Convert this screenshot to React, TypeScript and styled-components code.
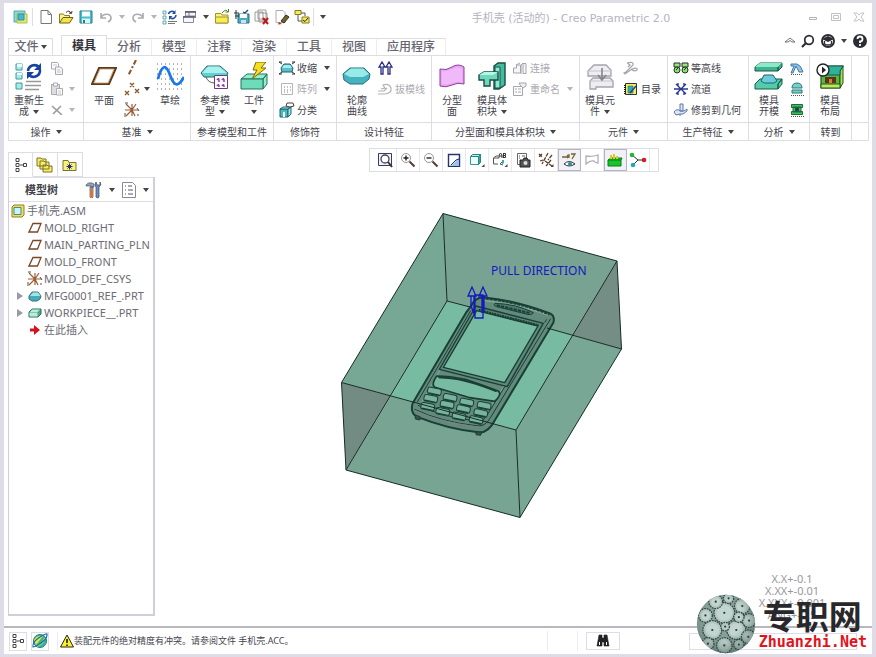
import React from 'react';
import styled, { createGlobalStyle, css } from 'styled-components';

const UI = '"Noto Sans", "Noto Sans CJK SC", sans-serif';
const line = '#dedde6';

const GlobalStyle = createGlobalStyle`
  * { box-sizing: border-box; }
  body { margin: 0; background: #fff; font-family: ${UI}; color: #444; }
  button, select { font: inherit; color: inherit; }
`;

/* ---------- icons ---------- */

const curve = 'M2 17C6 2 10 2 14 13S22 26 28 15';

const icons: Record<string, [number, number, React.ReactNode]> = {
  app: [16, 16, <><path d="M1 2h11v11H1z" fill="#8fd6d0" stroke="#56a8a8" /><path d="M4 5h10v9H4z" fill="#e5e86a" stroke="#a9c054" /><path d="M5 5h6v6H5z" fill="#3fb9d4" stroke="#3b8ea0" /></>],
  newFile: [14, 16, <path d="M2 1.500h7l3.500 4V14.500H2zM9 1.500v4h3.500" fill="#fff" stroke="#777" />],
  open: [16, 16, <><path d="M1.500 14V5h4l1 1.500h5V9" fill="#f8f29a" stroke="#8c7d1c" /><path d="M1.500 14 5 8.500h10L11.500 14z" fill="#f3e44c" stroke="#6f6312" /><path d="M8 3.500q3-3 5 .5m1-2-.5 2.500L11 4" fill="none" stroke="#333" /></>],
  save: [14, 14, <><path d="M1 1h12v12H1z" fill="#48bfc8" stroke="#2c7d8c" /><path d="M3 1.500h8v5H3z" fill="#f5ffff" /><path d="M3 8.500h8V13H3z" fill="#d8f6f6" /><path d="M4 10h2v3H4z" fill="#2c7d8c" /></>],
  undo: [14, 12, <path d="M2 2v5h5M2 7c2-5 10-5 10 0 0 2-1 3-3 4" fill="none" stroke="#aaa9b2" strokeWidth="1.600" />],
  redo: [14, 12, <path d="M12 2v5H7M12 7C10 2 2 2 2 7c0 2 1 3 3 4" fill="none" stroke="#aaa9b2" strokeWidth="1.600" />],
  regenSmall: [16, 16, <><path d="M1 2h3v3H1zM1 7h3v3H1zM1 12h3v3H1z" fill="#dff" stroke="#4b93a0" strokeWidth=".8" /><path d="M6.500 5a3.500 3.500 0 0 1 6-1.500M14 6a3.500 3.500 0 0 1-6 2.500" fill="none" stroke="#1d4f9f" strokeWidth="1.600" /><path d="M13.500 1v4H10zM7 11V7h3.500z" fill="#1d4f9f" /><path d="M6 12.500h9M6 14.500h7" stroke="#777" /></>],
  windows: [16, 14, <><path d="M3.500 1.500h10V6h-10zM1.500 6.500h10v6h-10z" fill="#f7f7fb" stroke="#8a8a9a" /><path d="M3 2h11M1 7h13" stroke="#55556b" strokeWidth="1.300" /><path d="M7 7V2" stroke="#778" /></>],
  folder: [16, 16, <><path d="M1.500 14V4.500H7L8 6h6v8z" fill="#fbf27a" stroke="#a0942e" /><path d="M1.500 14V8H14v6z" fill="#f6ec54" stroke="#a0942e" /><path d="M8 4q4-5 6-1M14.500 0v3h-3" fill="none" stroke="#5a7d2c" /></>],
  saveCheck: [16, 16, <><path d="M4 5h11v9H4z" fill="#48aebc" stroke="#2c6b80" /><path d="M6 5h7v4H6z" fill="#fff" /><path d="M7 11h5v3H7z" fill="#cdf" /><path d="M2 1v9M0 4h5M1 7h4" stroke="#333" /><path d="M9 3l2 1 3-3" fill="none" stroke="#246" strokeWidth="1.300" /></>],
  discard: [16, 16, <><path d="M1 3h8v9H1zM4 1h8v9H4zM5 4h8v9H5z" fill="#fafafa" stroke="#888" strokeWidth=".8" /><path d="m9 9 5 6m0-6-5 6" stroke="#c01818" strokeWidth="2" /></>],
  erase: [16, 16, <><path d="M2 1.500h7l2 2v10H2z" fill="#fff" stroke="#aab" /><path d="m12 6-5 6 3 2 5-6z" fill="#6f6330" stroke="#3a2f14" /><path d="m5 13 3 2-4 .5z" fill="#c22" /></>],
  treeCheck: [16, 16, <><path d="M1 1.500h6v4H1zM8 8h7v6H8z" fill="#f7ec5b" stroke="#877b16" /><path d="M4 6v6h4M7 4h4v3" fill="none" stroke="#555" /><path d="m9 11 2 1.500L14 9" fill="none" stroke="#222" /></>],
  regen: [28, 30, <><path d="M1 3h6v6H1zM1 12h6v6H1zM1 22h6v6H1z" fill="#a5ece8" stroke="#3f98a0" /><path d="M2 3h5v3H2zM2 12h5v2H2z" fill="#edffff" /><path d="M13 10a6.500 6.500 0 0 1 11-4M25 9a6.500 6.500 0 0 1-11 5" fill="none" stroke="#1742a0" strokeWidth="2.600" /><path d="M26 2v7h-7zM12 18v-7h7z" fill="#1742a0" /><path d="M11 20.500h15M10 24.500h16M10 28.500h14" stroke="#999" strokeWidth="1.300" /></>],
  copy: [14, 14, <><path d="M1.500 1.500h6l1 1V8h-7z" fill="#fff" stroke="#aaa9b0" /><path d="M5.500 6h5l2 2v5.500h-7z" fill="#f6f5f9" stroke="#aaa9b0" /><path d="M3 4h4M7 9h3M7 11h4" stroke="#c5c4cc" /></>],
  paste: [14, 14, <><path d="M1.500 2.500h8v10h-8z" fill="#dddce2" stroke="#aaa9b0" /><path d="M3.500 1h4v3h-4zM6.500 6.500h6V13h-6z" fill="#fff" stroke="#aaa9b0" /><path d="M8 9h3M8 11h3" stroke="#c0bfc6" /></>],
  cross: [12, 10, <path d="m1 1 10 9M10 1 2 9" stroke="#9b9aa2" strokeWidth="1.600" />],
  plane: [26, 20, <><path d="M8 2h17l-7 16H1z" fill="#fff" stroke="#5e3c1e" strokeWidth="2" /><path d="M9 3h14l-6 14H3z" fill="none" stroke="#c99461" strokeWidth=".8" /></>],
  axis: [14, 16, <path d="M11 0 3 16" stroke="#8a5328" strokeWidth="2" strokeDasharray="5 2 2 2" />],
  points: [16, 14, <path d="m6 1 4 4m0-4L6 5M1 9l4 4m0-4-4 4M11 7l4 4m0-4-4 4" stroke="#8a5328" strokeWidth="1.300" />],
  csys: [16, 16, <><path d="M8 8h7M8 8l-6 6M8 8 2 2M8 8l4-6M8 8l3 6M8 8H1M8 8V2M8 8v6" stroke="#9a5c33" strokeWidth="1.200" /><path d="M1 11v4M1 1h3M13 6l2 3M14 12v2" stroke="#555" /></>],
  sketch: [28, 28, <><path d="M1 2h27M1 7h27M1 12h27M1 17h27M1 22h27M1 27h27" stroke="#667" strokeDasharray="1 3" /><path d={curve} fill="none" stroke="#1a78e8" strokeWidth="2.800" /></>],
  refModel: [30, 28, <><path d="M1 11 7 4h13l8 7-2 4H4z" fill="#62cfd0" stroke="#236a72" /><path d="M2 11 8 4.500h11l8 6.500z" fill="#a9f1ec" /><path d="M6 15q2 6 9 6" fill="none" stroke="#555" /><path d="M14.500 13.500h13v13h-13z" fill="#fff" stroke="#6b3c82" /><path d="M17 18q2-3 2 1v1m3-2q2-3 2 1v1m-7 4q2-3 2 1m3-1q2-3 2 1" fill="none" stroke="#93a" strokeWidth="1.500" /></>],
  workpiece: [30, 28, <><path d="M2 17 8 12h20l-4 5zM24 17l4-5v10l-4 5z" fill="#8ff0d0" stroke="#26735b" /><path d="M2 17h22v10H2z" fill="#6ddcb8" stroke="#26735b" /><path d="m17 0-3 8h4l-5 9L27 6h-5l5-6z" fill="#f7dc22" stroke="#7b6a0e" /></>],
  shrink: [16, 14, <><path d="M2 7 5 3h6l3 4-1 4H3z" fill="#59bfc8" stroke="#1f636e" /><path d="M5 4h6l2 3H3z" fill="#a6eeee" /><path d="m0 1 3 2M16 1l-3 2M0 13l3-2M16 13l-3-2M0 1h3M16 1h-3M0 13h3m13 0h-3" stroke="#333" /></>],
  pattern: [14, 14, <><path d="M1.500 1.500h11v11h-11z" fill="#fff" stroke="#b5b4bc" /><path d="M4 5h1m2 0h1m2 0h1M4 8h1m2 0h1m2 0h1M4 10h1m2 0h1" stroke="#aaa" strokeWidth="1.500" /></>],
  classify: [16, 16, <><path d="M1 7h8v8H1z" fill="#4db9bd" stroke="#1c646e" /><path d="m1 7 3-2h8L9 7zM9 7l3-2v7l-3 3z" fill="#9eeaea" stroke="#1c646e" /><path d="M8 1h6l1 3-4 1-4-1z" fill="#fff" stroke="#444" /><path d="M4 15v-5h2v5" fill="#eff" /></>],
  silhouette: [30, 20, <><path d="M1 8 8 2h14l6 6-1 5-6 5H8l-6-4z" fill="#46b2bf" stroke="#22707c" /><path d="M2 8 9 2.500h12L27 8l-6 3H8z" fill="#96ebe9" /></>],
  pull: [16, 14, <path d="M4 13V6H2l3-5 3 5H6v7zM11 13V6H9l3-5 3 5h-2v7z" fill="#fff" stroke="#2b2b83" strokeWidth="1.300" />],
  draft: [16, 14, <path d="M1 12h7q7-1 6-6-2-5-8-3l2 3-4 1M1 9h6l3-3" fill="none" stroke="#b3b2b9" strokeWidth="1.200" />],
  surface: [26, 24, <><path d="M1 5q6 2 12-2t12 0v17q-6-2-12 1T1 22z" fill="#e9a6f3" stroke="#8a3f9c" /><path d="M3 7q5 1 10-2t10 0v13q-5-1-10 1T3 20z" fill="#f0baf8" /></>],
  volume: [28, 28, <><path d="M20 1h7v22l-6 4h-5V4z" fill="#45bba1" stroke="#174f45" strokeWidth="1.400" /><path d="M17 5h5v21h-5z" fill="#8fead0" stroke="#174f45" /><path d="M1 13l5-3h14v8H12v6H6v-6H1z" fill="#6fd8bd" stroke="#174f45" strokeWidth="1.400" /><path d="m1 13 5-3h14l-5 3z" fill="#b5f7e7" /></>],
  attach: [16, 14, <path d="M1.500 7h3V4h4v8h-7zM11 2.500h3v10h-3zM4 4l4-2M11 2l-2 2v9" fill="#f6f6f8" stroke="#a5a4ac" />],
  rename: [16, 16, <><path d="M1.500 5.500h9v9h-9z" fill="#fff" stroke="#a5a4ac" /><path d="M3 8h2m1 0h3M3 11h2m1 0h3M7 2h7v3l-3 2-3-3z" fill="#eee" stroke="#a5a4ac" /></>],
  component: [28, 28, <><path d="M2 9 8 3h12l5 5v6H2zM7 16h17l3 3v6H10v2H4v-8z" fill="#eeedf1" stroke="#a5a4ac" strokeWidth="1.300" /><path d="M2 9h23M4 19h22" stroke="#c6c5cc" /><path d="M16 6v11m-4-4 4 5 4-5" fill="none" stroke="#85848c" strokeWidth="1.600" /></>],
  ejector: [16, 14, <path d="M4 2q7-2 6 2L3 11l-2 1 1 1 7-5q6-2 5 1-3 2-6-1M4 2l3 2-2 2" fill="none" stroke="#a5a4ac" strokeWidth="1.200" />],
  catalog: [14, 14, <><path d="M1.500 1.500h11v11h-11z" fill="#f5ef64" stroke="#333" /><path d="M1 3v9" stroke="#111" strokeWidth="2" strokeDasharray="1 1" /><path d="M4 4h5v7H4z" fill="#38a7bd" stroke="#276" strokeWidth=".6" /><path d="m6 11 6-7" stroke="#248" strokeWidth="1.500" /></>],
  waterline: [16, 14, <><path d="M1 2h6v4H1zM9 2h6v4H9z" fill="#9fe37a" stroke="#233" /><circle cx="4" cy="9" r="3" fill="#8de06c" stroke="#233" /><circle cx="12" cy="9" r="3" fill="#8de06c" stroke="#233" /><path d="m3 9 2-2m6 2 2-2" stroke="#233" /></>],
  runner: [16, 14, <path d="M1 7h14M8 7 3 2M8 7l5-5M8 7l-5 5M8 7l5 5M5 1v3M11 1v3M5 10v3M11 10v3" fill="none" stroke="#2a3a92" strokeWidth="1.400" />],
  trim: [16, 14, <path d="M7 1h3v7H7zM1 9q3-4 6-1h4l3-2v2l-4 3H7l-4 1zM7 11v2" fill="#dce6f8" stroke="#5c77a8" />],
  opening: [30, 28, <><path d="M1 5 6 1h22l-4 4v4H1zM24 5l4-4v4l-4 4z" fill="#3fb190" stroke="#185a49" /><path d="m1 5 5-4h22l-4 4z" fill="#8aebcb" /><path d="m1 22 5-5h22l-4 5v5H1zM24 22l4-5v5l-4 5z" fill="#52cda8" stroke="#185a49" /><path d="m7 19 3-6h9l4 6-3 2H10z" fill="#6ccbd8" stroke="#22606e" /></>],
  draftCheck: [14, 14, <><path d="M1 3h6q4 1 6 8h-4L6 5l-3 7H1l3-7H1z" fill="#8cc5e8" stroke="#4678a8" /><path d="M1 13.500h12" stroke="#555" strokeDasharray="1 1" /></>],
  thickness: [14, 14, <><path d="M2 6q0-5 5-5t5 5zM2 8h10v3H2z" fill="#76d1c7" stroke="#2a7778" /><path d="M1 13.500h13" stroke="#555" strokeDasharray="1 1" /></>],
  splitCheck: [14, 14, <><path d="M1.500 1.500h11v3h-11zM3 4h8v5H3zM1.500 8.500h11v3h-11z" fill="#3fbf60" stroke="#1d6b37" /><path d="M5 5h4v3H5z" fill="#245" /><path d="M1 13.500h13" stroke="#555" strokeDasharray="1 1" /></>],
  layout: [28, 28, <><path d="M5 9 9 4h18l-3 5v17H5z" fill="#58b83c" stroke="#23551c" strokeWidth="1.200" /><path d="m24 9 3-5v17l-3 5z" fill="#a9df55" stroke="#23551c" /><path d="M5 9 9 4h18l-3 5v4H5z" fill="#2fb29a" stroke="#18594c" /><path d="M5 22h19v4H5z" fill="#bfe95c" stroke="#23551c" /><path d="M9 15h11v6H9z" fill="#5b3320" /><path d="M13 17h3v4h-3z" fill="#dc7b32" /><circle cx="7" cy="8" r="6" fill="#fff" stroke="#222" strokeWidth="1.400" /><path d="M6 4.500v7l4-3.500z" fill="#222" /></>],
  refit: [16, 16, <><path d="M1.500 1.500h13v12h-13z" fill="#eef1fb" stroke="#343a6e" /><circle cx="8" cy="7" r="4" fill="#fff" stroke="#444" strokeWidth="1.300" /><path d="m11 10 4 5" stroke="#333" strokeWidth="2" /></>],
  zoomIn: [16, 16, <><circle cx="6" cy="6" r="4.500" fill="#fff" stroke="#999" /><path d="M3.500 6h5M6 3.500v5" stroke="#222" strokeWidth="1.400" /><path d="m9.500 9.500 5 5" stroke="#4e3e36" strokeWidth="2" /></>],
  zoomOut: [16, 16, <><circle cx="6" cy="6" r="4.500" fill="#fff" stroke="#999" /><path d="M3.500 6h5" stroke="#222" strokeWidth="1.400" /><path d="m9.500 9.500 5 5" stroke="#4e3e36" strokeWidth="2" /></>],
  repaint: [14, 14, <><path d="M1.500 1.500h11v12h-11z" fill="#fff" stroke="#26356f" strokeWidth="1.400" /><path d="M4 13 12 5v8z" fill="#9cc1ee" /><path d="m4 12 5-5 3-1" fill="none" stroke="#26356f" /></>],
  shaded: [16, 16, <><path d="M1.500 4.500h8v8h-8z" fill="#f3ffff" stroke="#399" /><path d="m1.500 4.500 2-2h8l-2 2z" fill="#b9ece6" stroke="#288" /><path d="m9.500 4.500 2-2v8l-2 2z" fill="#36a79d" stroke="#288" /><path d="M15.500 12v3h-3z" fill="#444" /></>],
  saved: [16, 16, <><path d="M6 12H1.500V6L4 4h2M1.500 6H7M10 10l-2 2 3 1" fill="none" stroke="#555" /><path d="M7 6V3l1.500-2L10 3v3M7 4h3M11.500 1v5M11.500 1.500h2v2h-2m2 0v2h-2" fill="none" stroke="#333" /><path d="M10 8v5l2-2V8z" fill="#4ab" /><path d="M15.500 12v3h-3z" fill="#444" /></>],
  camera: [16, 16, <><path d="M2.500 1.500h9v11h-9z" fill="#fff" stroke="#666" /><path d="M4 4h1m2 0h3M4 6h1" stroke="#555" /><path d="M5 8h3l1-2h3l1 2h2v7H5z" fill="#555" stroke="#222" /><circle cx="10.500" cy="11" r="2" fill="#ddd" /></>],
  datum: [16, 16, <><path d="m1 2 3 3m0-3L1 5M10 1 4 12M14 3l-4 5M7 9l7 5m-1-6-5 6M2 9l3-1" stroke="#5d3d28" strokeWidth="1.300" strokeDasharray="4 1" /><path d="M15.500 12v3h-3z" fill="#444" /></>],
  annotation: [16, 16, <><path d="M1 5h7V2M6 3l2 2-2 1M10 2h4l-3 5" fill="none" stroke="#74662a" strokeWidth="1.300" /><path d="M3 12q5-5 11 0-6 4-11 0z" fill="#fff" stroke="#333" /><circle cx="9" cy="12" r="2" fill="#2c8f9b" /></>],
  section: [16, 14, <path d="M2 3q6 1 12-1v8q-3 0-4-2-4-1-8 3z" fill="none" stroke="#b1b0b7" strokeWidth="1.300" />],
  spin: [18, 16, <><path d="M2 8h13v6H2zM2 8l3-2h11l-1 2" fill="#17c52b" stroke="#087a16" /><path d="M5 7V3m3 4V2m3 5V4" stroke="#e3c626" strokeWidth="2" /></>],
  center: [18, 16, <><path d="m3 3 6 5h6M9 8l-5 5" fill="none" stroke="#333" /><circle cx="3" cy="3" r="2.300" fill="#28b33b" /><circle cx="15" cy="8" r="2.300" fill="#d21c1c" /><circle cx="4" cy="13" r="2.300" fill="#2aa6bb" /></>],
  tree: [14, 16, <><path d="M2 1.500h3v3H2zM2 6.500h3v3H2zM2 11.500h3v3H2zM9.500 6.500h3v3h-3z" fill="#fff" stroke="#444" /><path d="M6 8h3" stroke="#444" /></>],
  folders: [18, 18, <path d="M1 2h4l1 1h4v7H1zM4 5h4l1 1h4v7H4zM7 9h4l1 1h4v6H7z" fill="#f5ed66" stroke="#7c722a" />],
  favorite: [16, 14, <><path d="M1 12.500v-10h5l1 2h7v8z" fill="#f8f27a" stroke="#7c722a" /><path d="M4.500 8.500h6M7.500 5.500v6M5.500 6.500l4 4m0-4-4 4" stroke="#22317c" /></>],
  tools: [18, 18, <><path d="M1 4q2-3 6-2l2 1v3H6V5H1zM5 6h3v10H5z" fill="#8fa4bd" stroke="#556" strokeWidth=".7" /><path d="M5 8h3v9H5z" fill="#d0763e" /><path d="M11 1q-2 3 0 5v10q2 2 3 0V6q3-2 1-5v3h-3z" fill="#6b8eca" stroke="#445" strokeWidth=".7" /></>],
  list: [16, 18, <><path d="M1.500 1.500h10l3 3v12h-13z" fill="#fff" stroke="#889" /><path d="M4 5h1m2 0h4M4 9h1m2 0h5M4 13h1m2 0h5" stroke="#556" /></>],
  asm: [14, 14, <><path d="M1 3 3 1h10v10l-2 2H1z" fill="#f2dc58" stroke="#977e20" /><path d="M3 3.500h7v7H3z" fill="#c5f5f9" stroke="#388fa0" /></>],
  planeSmall: [14, 12, <path d="M5 1.500h8L9.500 10H1z" fill="#fff" stroke="#7a4528" strokeWidth="1.300" />],
  refPart: [14, 12, <><path d="M1 6 4 2h6l3 4-1 3-3 2H4L1 9z" fill="#4ba9b7" stroke="#2f7480" /><path d="M2 6 5 2.500h5L12.500 6z" fill="#9be6e6" /></>],
  workPart: [14, 12, <><path d="m1 5 3-3h9v5l-3 3H1z" fill="#4fa58b" stroke="#2f6c5a" /><path d="M1.500 5.500h8v4h-8zM2 5l2-2.500h8L9.500 5z" fill="#b9ecd9" /></>],
  insert: [12, 12, <path d="M1 4.500h4V1l6 5-6 5V7.500H1z" fill="#d4141c" />],
  browser: [18, 18, <><circle cx="9" cy="9" r="6.500" fill="#35b4a0" stroke="#217f91" /><path d="M3 8Q6 3 12 4L5 13z" fill="#e6e93a" /><path d="M6 14q6-2 8-8" fill="none" stroke="#9be04a" strokeWidth="2" /><path d="M2 15Q1 10 9 5t7-2q0 4-6 8t-8 4z" fill="none" stroke="#1c64b2" strokeWidth="1.200" /></>],
  warning: [14, 14, <><path d="M7 1 13.500 13H.5z" fill="#fff22c" stroke="#222" /><path d="M7 5v4m0 1.500V12" stroke="#111" strokeWidth="1.500" /></>],
  binoculars: [14, 14, <><path d="M3 1h3v3h2V1h3l2 11H8V8H6v4H1z" fill="#222" stroke="#222" strokeWidth=".6" /><path d="M3.500 8v3M10.500 8v3" stroke="#fff" /></>],
  collapse: [12, 8, <path d="m1 5 5-4 5 4H8L6 3.500 4 5z" fill="#fff" stroke="#555" strokeWidth=".8" />],
  search: [14, 14, <><circle cx="8" cy="6" r="4.300" fill="none" stroke="#2c2c34" strokeWidth="1.700" /><path d="m5 9-4 4" stroke="#2c2c34" strokeWidth="2.200" /></>],
  learn: [16, 16, <><circle cx="8" cy="8" r="6" fill="#fff" stroke="#2c2c34" strokeWidth="2" /><path d="m2 6 6-3 6 3-6 3z" fill="#2c2c34" /><path d="M4.500 8v3q3.500 2 7 0V8" fill="none" stroke="#2c2c34" strokeWidth="1.300" /></>],
  help: [16, 16, <><circle cx="8" cy="8" r="7" fill="#2c2c34" /><path d="M5.500 6q0-2.500 2.500-2.500T10.500 6 8 8.500V10m0 1v2" fill="none" stroke="#fff" strokeWidth="1.800" /></>],
  minimize: [10, 10, <path d="M1.500 5.500h7v2h-7z" fill="#fff" stroke="#b5b4bc" />],
  maximize: [12, 10, <path d="M1.500 1.500h9v7h-9zM3.500 3.500h5v3h-5z" fill="#fff" stroke="#c2c1c9" />],
  close: [12, 10, <path d="M1 1h3l2 2 2-2h3L8 5l3 4H8L6 7 4 9H1l3-4z" fill="#fff" stroke="#c2c1c9" />],
};

const Glyph = styled.svg`
  display: block;
  flex: none;
`;

function Icon({ name }: { name: string }) {
  const [w, h, shape] = icons[name];
  return <Glyph width={w} height={h} viewBox={`0 0 ${w} ${h}`} aria-hidden="true">{shape}</Glyph>;
}

const Caret = styled.span<{ $dim?: boolean }>`
  display: inline-block;
  flex: none;
  border: 3px solid transparent;
  border-top: 4px solid ${p => (p.$dim ? '#b5b4bc' : '#444')};
  border-bottom: 0;
`;

/* ---------- window frame ---------- */

const Shell = styled.div`
  position: relative;
  display: flex;
  flex-direction: column;
  min-height: 100vh;
  border: 4px solid #dddce7;
  border-top-width: 3px;
`;

const TitleBar = styled.header`
  display: flex;
  align-items: center;
  height: 27px;
  padding: 0 2px 0 7px;
`;

const plain = css`
  display: flex;
  align-items: center;
  justify-content: center;
  padding: 0;
  border: 0;
  background: none;
`;

const QuickButton = styled.button<{ $slim?: boolean }>`
  ${plain}
  width: ${p => (p.$slim ? 12 : 20)}px;
  height: 20px;
`;

const QuickDivider = styled.span`
  width: 1px;
  height: 18px;
  margin: 0 3px 0 1px;
  background: ${line};
`;

const WindowTitle = styled.h1`
  flex: 1;
  margin: 0;
  padding-left: 12px;
  text-align: center;
  font: 11px "DejaVu Sans", "Noto Sans CJK SC", sans-serif;
  color: #b4b3bf;
`;

const WindowButton = styled.button`
  ${plain}
  width: 23px;
  height: 20px;
`;

const TabRow = styled.nav`
  display: flex;
  align-items: flex-end;
  height: 25px;
  padding: 0 4px;
`;

const Tab = styled.button<{ $kind?: 'file' | 'active' }>`
  ${plain}
  gap: 2px;
  height: 17px;
  min-width: 45px;
  padding: 0 10px;
  font-size: 12px;
  font-weight: 500;
  line-height: 16px;
  color: #66656f;
  white-space: nowrap;
  border-top: 1px solid ${line};
  border-right: 1px solid #ecebf1;
  ${p => p.$kind === 'file' && css`
    margin-right: 8px;
    padding: 0 5px;
    border: 1px solid ${line};
    border-bottom: 0;
  `}
  ${p => p.$kind === 'active' && css`
    height: 20px;
    font-weight: 700;
    color: #33323a;
    border: 1px solid ${line};
    border-bottom: 0;
  `}
`;

const TabTools = styled.div`
  display: flex;
  align-items: center;
  gap: 5px;
  height: 28px;
  margin-left: auto;
`;

const ToolButton = styled.button`
  ${plain}
`;

/* ---------- ribbon ---------- */

const Ribbon = styled.section`
  display: grid;
  grid-template-columns: 75px 107px 83px 63px 95px 148px 88px 81px 61px 42px 1fr;
  height: 86px;
  margin: 0 3px 0 4px;
  border: 1px solid ${line};
  font-size: 10px;
  color: #44434c;
`;

const Group = styled.div`
  display: flex;
  flex-direction: column;
  min-width: 0;
  border-right: 1px solid ${line};
  &:last-child { border-right: 0; }
`;

const GroupBody = styled.div`
  display: flex;
  flex: 1;
  padding-top: 1px;
`;

const GroupLabel = styled.div`
  display: flex;
  align-items: center;
  justify-content: center;
  gap: 5px;
  height: 18px;
  border-top: 1px solid ${line};
  line-height: 16px;
  white-space: nowrap;
`;

const BigButton = styled.button<{ $w?: number }>`
  ${plain}
  flex-direction: column;
  justify-content: flex-start;
  width: ${p => p.$w ?? 40}px;
  height: 64px;
  line-height: 11px;
  white-space: nowrap;
`;

const BigIcon = styled.span`
  display: flex;
  align-items: center;
  justify-content: center;
  height: 38px;
`;

const BigLine = styled.span`
  display: flex;
  align-items: center;
  justify-content: center;
  gap: 4px;
  min-height: 11px;
`;

const Stack = styled.div<{ $pad?: number }>`
  display: flex;
  flex-direction: column;
  padding-left: ${p => p.$pad ?? 0}px;
`;

const SmallButton = styled.button<{ $dim?: boolean }>`
  ${plain}
  justify-content: flex-start;
  gap: 2px;
  height: 21px;
  line-height: 14px;
  white-space: nowrap;
  color: ${p => (p.$dim ? '#aaa9b1' : '#44434c')};
`;

const CaretSlot = styled.span<{ $near?: boolean }>`
  display: flex;
  margin-left: ${p => (p.$near ? 2 : 5)}px;
`;

const IconSlot = styled.span`
  display: flex;
  justify-content: center;
  width: 16px;
`;

type Small = { icon: string; label: string; text?: string; caret?: 'dark' | 'dim'; dim?: boolean };

function SmallTool({ icon, label, text, caret, dim }: Small) {
  return (
    <SmallButton $dim={dim} aria-label={label}>
      <IconSlot><Icon name={icon} /></IconSlot>
      {text}
      {caret && <CaretSlot $near={!text}><Caret $dim={caret === 'dim'} /></CaretSlot>}
    </SmallButton>
  );
}

function BigTool({ icon, lines, caret, w }: { icon: string; lines: string[]; caret?: boolean; w?: number }) {
  return (
    <BigButton $w={w}>
      <BigIcon><Icon name={icon} /></BigIcon>
      {lines.map((t, i) => (
        <BigLine key={i}>{t}{caret && i === lines.length - 1 && <Caret />}</BigLine>
      ))}
    </BigButton>
  );
}

function RibbonGroup({ label, caret, children }: { label: string; caret?: boolean; children: React.ReactNode }) {
  return (
    <Group>
      <GroupBody>{children}</GroupBody>
      <GroupLabel>{label}{caret && <Caret />}</GroupLabel>
    </Group>
  );
}

/* ---------- work area ---------- */

const Work = styled.main`
  display: flex;
  flex: 1;
`;

const Side = styled.aside`
  display: flex;
  flex-direction: column;
  width: 151px;
  padding: 11px 0 10px 4px;
`;

const SideTabs = styled.div`
  display: flex;
`;

const SideTab = styled.button<{ $active?: boolean }>`
  ${plain}
  width: 25px;
  height: 25px;
  border: 1px solid ${line};
  border-left-width: ${p => (p.$active ? 1 : 0)}px;
  border-bottom-color: ${p => (p.$active ? '#fff' : line)};
`;

const Panel = styled.div`
  flex: 1;
  border: solid #cfceda;
  border-width: 0 2px 2px 1px;
`;

const PanelHead = styled.div`
  display: flex;
  align-items: center;
  gap: 6px;
  height: 25px;
  padding: 0 4px 0 16px;
  border-top: 1px solid ${line};
  border-bottom: 1px solid ${line};
`;

const PanelTitle = styled.h2`
  flex: 1;
  margin: 0;
  font-size: 11px;
  line-height: 16px;
  color: #44434c;
`;

const TreeList = styled.ul`
  margin: 0;
  padding: 0;
  list-style: none;
`;

const TreeRow = styled.li<{ $root?: boolean }>`
  display: flex;
  align-items: center;
  gap: 1px;
  height: 17px;
  padding-left: ${p => (p.$root ? 1 : 8)}px;
  font-size: 11px;
  line-height: 16px;
  color: #6c6b73;
  white-space: nowrap;
`;

const Twisty = styled.span<{ $show?: boolean }>`
  margin-right: 3px;
  border: 4px solid transparent;
  border-left: 6px solid ${p => (p.$show ? '#9b9aa2' : 'transparent')};
  border-right: 0;
`;

const View = styled.section`
  display: flex;
  flex: 1;
  flex-direction: column;
  min-width: 0;
`;

const ViewBar = styled.div`
  display: flex;
  align-self: center;
  margin-top: 7px;
  padding: 0 8px 0 4px;
  border: 1px solid ${line};
`;

const ViewButton = styled.button<{ $on?: boolean }>`
  ${plain}
  width: 23px;
  height: 22px;
  border-right: 1px solid #e9e8ef;
  ${p => p.$on && css`
    border: 1px solid #b4b3be;
    background: #f1f0f6;
  `}
`;

const Scene = styled.svg`
  display: block;
  flex: 1;
  width: 100%;
  min-height: 0;
`;

/* ---------- status bar ---------- */

const Status = styled.footer`
  display: flex;
  align-items: center;
  gap: 4px;
  height: 28px;
  padding: 0 15px 0 5px;
  border-top: 2px solid #b8b7bd;
  font-size: 9px;
  color: #44434c;
`;

const StatusToggle = styled.button`
  ${plain}
  width: 18px;
  height: 19px;
  border: 1px solid ${line};
`;

const Message = styled.p`
  display: flex;
  flex: 1;
  align-items: center;
  margin: 0 0 0 4px;
  padding-left: 2px;
  border-left: 1px solid #ecebf1;
  line-height: 18px;
`;

const StatusCell = styled.span`
  width: 31px;
  height: 20px;
  border: solid #ecebf1;
  border-width: 0 1px;
`;

const FindButton = styled.button`
  ${plain}
  width: 34px;
  height: 18px;
  margin: 0 65px 0 4px;
  border: 1px solid ${line};
`;

const Filter = styled.select`
  width: 168px;
  height: 17px;
  border: 1px solid ${line};
  background: #fff;
  appearance: none;
`;

/* ---------- overlay in the corner ---------- */

const Tolerances = styled.div`
  position: absolute;
  right: 36px;
  bottom: 33px;
  width: 88px;
  text-align: center;
  font-size: 11px;
  line-height: 12px;
  color: #98979d;
`;

const Brand = styled.div`
  position: absolute;
  right: 5px;
  bottom: 0;
  display: flex;
  align-items: flex-end;
`;

const BrandText = styled.div`
  display: flex;
  flex-direction: column;
  margin-bottom: 2px;
`;

const BrandName = styled.strong`
  padding-left: 7px;
  font: 700 33px/34px "Noto Sans CJK SC", sans-serif;
  color: #28272b;
`;

const BrandSite = styled.span`
  padding-left: 3px;
  font: 700 15px/20px "DejaVu Sans Mono", monospace;
  color: #e3131b;
`;

/* ---------- model drawing ---------- */

const keys = [
  [103, 333], [150, 352], [200, 366], [252, 376],
  [92, 355], [141, 373], [190, 386], [242, 398],
  [83, 379], [128, 394], [177, 408], [228, 419],
];

function Model() {
  return (
    <Scene viewBox="155 172 717 454" role="img" aria-label="模具工件">
      <g stroke="none">
        <path d="M443 213.500 617 261 572 335 447 301z" fill="#78a393" />
        <path d="M617 261 621.500 349 572 335z" fill="#748d85" />
        <path d="M443 213.500 447 301 391 396 341.500 382.500z" fill="#77a895" />
        <path d="M447 301 572 335 516 430 391 396z" fill="#77bba3" />
        <path d="M341.500 382.500 391 396 346 470z" fill="#728c84" />
        <path d="M391 396 516 430 520 517.500 346 470z" fill="#78a493" />
        <path d="M516 430 572 335 621.500 349 520 517.500z" fill="#78a796" />
      </g>
      <g transform="translate(400 280) scale(.3333)" fill="none" stroke="#1a3f34" strokeWidth="3" strokeLinejoin="round">
        <path d="M212 80Q225 48 258 53C330 60 400 82 450 100Q466 108 460 128L285 420Q265 460 235 457C170 450 100 430 50 410Q30 398 38 370L198 98z" fill="#628a7d" strokeWidth="6" />
        <path d="M44 388Q120 425 235 438 258 438 272 412L452 116M54 376Q130 412 236 424 250 424 262 404L440 118M52 366 212 92" strokeWidth="3" />
        <path d="M45 392Q120 428 240 442" stroke="#77847f" strokeWidth="4" />
        <path d="M62 372 222 92M262 396 434 128" stroke="#87a79b" />
        <path d="M250 62Q350 70 446 106" stroke="#88a89c" strokeWidth="4" />
        <path d="M258 56Q360 68 448 104" strokeWidth="5" strokeDasharray="8 4" />
        <path d="M285 70Q350 72 400 98 395 108 375 101L290 80Q278 76 285 70z" fill="#4f7a6d" />
        <path d="M290 76 390 99" strokeWidth="6" strokeDasharray="10 3" />
        <path d="M228 78 430 130 322 320 118 268z" fill="#557f72" strokeWidth="4" />
        <path d="M230 92 414 138 314 308 130 262z" fill="#77bba3" strokeWidth="4" />
        <path d="M228 85 422 133 318 314 124 265z" stroke="#6d9788" strokeWidth="2" />
        <path d="M236 90 416 136" strokeWidth="7" strokeDasharray="6 2" />
        <path d="M110 288Q150 288 196 298 250 316 296 334 306 344 284 364L205 352 105 322Q92 314 110 288z" fill="#77bba3" strokeWidth="5" />
        <path d="M115 292 145 294Q200 298 290 334" strokeWidth="6" />
        {keys.map(([x, y]) => (
          <g key={`${x}-${y}`} transform={`translate(${x} ${y}) rotate(12)`}>
            <rect x="-20" y="-9" width="41" height="20" rx="7" fill="#77b39e" strokeWidth="3" />
            <path d="M-16 9h33" strokeWidth="4" />
          </g>
        ))}
        <path d="M46 405v12l14 3v-10zM228 456v8l14 2 4-10z" fill="#36534a" />
      </g>
      <g fill="none" stroke="#172b25" strokeWidth="1">
        <path d="M443 213.500 617 261 621.500 349 520 517.500 346 470 341.500 382.500z" />
        <path d="M341.500 382.500 516 430 617 261M516 430 520 517.500M443 213.500 447 301 470 307M547 328 621.500 349M447 301 346 470" />
      </g>
      <g fill="none" stroke="#1519c0" strokeWidth="1.300">
        <path d="M472 287l-4 9h8zM483 287l-4 9h8zM471 296v10l4 10M474 296v18M482 296v17M484 296v16M475 295h8v23h-8z" />
      </g>
      <text x="491" y="275" fontFamily={UI} fontSize="12" fill="#1519c0">PULL DIRECTION</text>
    </Scene>
  );
}

const gears = [
  [33, 22, 12], [54, 14, 9], [47, 42, 11], [19, 42, 11], [62, 31, 8], [61, 50, 8],
  [11, 25, 8], [33, 60, 9], [23, 9, 8], [50, 27, 6], [34, 38, 5], [50, 59, 6], [14, 58, 7], [38, 5, 6],
];

const Ball = () => (
  <Glyph width="60" height="60" viewBox="0 0 70 70" aria-hidden="true">
    <defs>
      <clipPath id="ball"><circle cx="35" cy="35" r="34" /></clipPath>
      <radialGradient id="shade" cx=".45" cy=".4" r=".65">
        <stop offset=".5" stopColor="#3b5650" stopOpacity="0" />
        <stop offset="1" stopColor="#2b4640" stopOpacity=".5" />
      </radialGradient>
    </defs>
    <g clipPath="url(#ball)">
      <circle cx="35" cy="35" r="35" fill="#879f99" />
      {gears.map(([x, y, r]) => (
        <g key={`${x}-${y}`}>
          <circle cx={x} cy={y} r={r} fill="#b3c8c2" stroke="#344742" strokeWidth="1.500" strokeDasharray="2 1" />
          <circle cx={x} cy={y} r={r - 3} fill="#c3d5cf" />
          <circle cx={x} cy={y} r="1.300" fill="#283b37" />
        </g>
      ))}
      <circle cx="35" cy="35" r="35" fill="url(#shade)" />
    </g>
  </Glyph>
);

/* ---------- data ---------- */

const quick: (string | [string, string])[] = [
  ['app', '应用程序'], '|', ['newFile', '新建'], ['open', '打开'], ['save', '保存'], ['undo', '撤消'], 'v-',
  ['redo', '重做'], 'v-', ['regenSmall', '重新生成'], ['windows', '窗口'], 'v', ['folder', '工作目录'],
  ['saveCheck', '检入'], ['discard', '拭除'], ['erase', '清除'], ['treeCheck', '模型检查'], '|', 'v',
];

const tabs = ['分析', '模型', '注释', '渲染', '工具', '视图', '应用程序'];

const viewTools: [string, string, boolean?][] = [
  ['refit', '重新调整'], ['zoomIn', '放大'], ['zoomOut', '缩小'], ['repaint', '重画'], ['shaded', '显示样式'],
  ['saved', '已保存方向'], ['camera', '视图管理器'], ['datum', '基准显示'], ['annotation', '注释显示', true],
  ['section', '截面'], ['spin', '旋转中心', true], ['center', '模型中心'],
];

const tree: { icon: string; text: string; open?: boolean }[] = [
  { icon: 'planeSmall', text: 'MOLD_RIGHT' },
  { icon: 'planeSmall', text: 'MAIN_PARTING_PLN' },
  { icon: 'planeSmall', text: 'MOLD_FRONT' },
  { icon: 'csys', text: 'MOLD_DEF_CSYS' },
  { icon: 'refPart', text: 'MFG0001_REF_.PRT', open: true },
  { icon: 'workPart', text: 'WORKPIECE__.PRT', open: true },
  { icon: 'insert', text: '在此插入' },
];

export default function App() {
  return (
    <>
      <GlobalStyle />
      <Shell>
        <TitleBar>
          {quick.map((q, i) => {
            if (q === '|') return <QuickDivider key={i} />;
            if (typeof q === 'string') return <QuickButton key={i} $slim aria-label="更多"><Caret $dim={q === 'v-'} /></QuickButton>;
            return <QuickButton key={i} aria-label={q[1]}><Icon name={q[0]} /></QuickButton>;
          })}
          <WindowTitle>手机壳 (活动的) - Creo Parametric 2.0</WindowTitle>
          <WindowButton aria-label="最小化"><Icon name="minimize" /></WindowButton>
          <WindowButton aria-label="最大化"><Icon name="maximize" /></WindowButton>
          <WindowButton aria-label="关闭"><Icon name="close" /></WindowButton>
        </TitleBar>

        <TabRow>
          <Tab $kind="file">文件<Caret /></Tab>
          <Tab $kind="active">模具</Tab>
          {tabs.map(t => <Tab key={t}>{t}</Tab>)}
          <TabTools>
            <ToolButton aria-label="折叠"><Icon name="collapse" /></ToolButton>
            <ToolButton aria-label="搜索"><Icon name="search" /></ToolButton>
            <ToolButton aria-label="学习"><Icon name="learn" /></ToolButton>
            <ToolButton aria-label="更多"><Caret /></ToolButton>
            <ToolButton aria-label="帮助"><Icon name="help" /></ToolButton>
          </TabTools>
        </TabRow>

        <Ribbon>
          <RibbonGroup label="操作" caret>
            <BigTool icon="regen" lines={['重新生', '成']} caret />
            <Stack>
              <SmallTool icon="copy" label="复制" dim />
              <SmallTool icon="paste" label="粘贴" dim caret="dim" />
              <SmallTool icon="cross" label="删除" dim caret="dim" />
            </Stack>
          </RibbonGroup>
          <RibbonGroup label="基准" caret>
            <BigTool icon="plane" lines={['平面']} />
            <Stack>
              <SmallTool icon="axis" label="轴" />
              <SmallTool icon="points" label="点" caret="dark" />
              <SmallTool icon="csys" label="坐标系" />
            </Stack>
            <BigTool icon="sketch" lines={['草绘']} />
          </RibbonGroup>
          <RibbonGroup label="参考模型和工件">
            <BigTool icon="refModel" lines={['参考模', '型']} caret w={48} />
            <BigTool icon="workpiece" lines={['工件', '']} caret w={30} />
          </RibbonGroup>
          <RibbonGroup label="修饰符">
            <Stack $pad={5}>
              <SmallTool icon="shrink" label="收缩" text="收缩" caret="dark" />
              <SmallTool icon="pattern" label="阵列" text="阵列" caret="dark" dim />
              <SmallTool icon="classify" label="分类" text="分类" />
            </Stack>
          </RibbonGroup>
          <RibbonGroup label="设计特征">
            <BigTool icon="silhouette" lines={['轮廓', '曲线']} />
            <Stack>
              <SmallTool icon="pull" label="拖拉方向" />
              <SmallTool icon="draft" label="拔模线" text="拔模线" dim />
            </Stack>
          </RibbonGroup>
          <RibbonGroup label="分型面和模具体积块" caret>
            <BigTool icon="surface" lines={['分型', '面']} />
            <BigTool icon="volume" lines={['模具体', '积块']} caret />
            <Stack>
              <SmallTool icon="attach" label="连接" text="连接" dim />
              <SmallTool icon="rename" label="重命名" text="重命名" dim caret="dim" />
            </Stack>
          </RibbonGroup>
          <RibbonGroup label="元件" caret>
            <BigTool icon="component" lines={['模具元', '件']} caret />
            <Stack $pad={3}>
              <SmallTool icon="ejector" label="顶杆" />
              <SmallTool icon="catalog" label="目录" text="目录" />
            </Stack>
          </RibbonGroup>
          <RibbonGroup label="生产特征" caret>
            <Stack $pad={5}>
              <SmallTool icon="waterline" label="等高线" text="等高线" />
              <SmallTool icon="runner" label="流道" text="流道" />
              <SmallTool icon="trim" label="修剪到几何" text="修剪到几何" />
            </Stack>
          </RibbonGroup>
          <RibbonGroup label="分析" caret>
            <BigTool icon="opening" lines={['模具', '开模']} />
            <Stack>
              <SmallTool icon="draftCheck" label="拔模检查" />
              <SmallTool icon="thickness" label="厚度检查" />
              <SmallTool icon="splitCheck" label="分型面检查" />
            </Stack>
          </RibbonGroup>
          <RibbonGroup label="转到">
            <BigTool icon="layout" lines={['模具', '布局']} />
          </RibbonGroup>
          <RibbonGroup label="">{null}</RibbonGroup>
        </Ribbon>

        <Work>
          <Side>
            <SideTabs>
              <SideTab $active aria-label="模型树"><Icon name="tree" /></SideTab>
              <SideTab aria-label="文件夹浏览器"><Icon name="folders" /></SideTab>
              <SideTab aria-label="收藏夹"><Icon name="favorite" /></SideTab>
            </SideTabs>
            <Panel>
              <PanelHead>
                <PanelTitle>模型树</PanelTitle>
                <ToolButton aria-label="设置"><Icon name="tools" /></ToolButton>
                <Caret />
                <ToolButton aria-label="显示"><Icon name="list" /></ToolButton>
                <Caret />
              </PanelHead>
              <TreeList>
                <TreeRow $root><IconSlot><Icon name="asm" /></IconSlot>手机壳.ASM</TreeRow>
                {tree.map(n => (
                  <TreeRow key={n.text}>
                    <Twisty $show={n.open} />
                    <IconSlot><Icon name={n.icon} /></IconSlot>
                    {n.text}
                  </TreeRow>
                ))}
              </TreeList>
            </Panel>
          </Side>
          <View>
            <ViewBar>
              {viewTools.map(([icon, label, on]) => (
                <ViewButton key={icon} $on={on} aria-label={label}><Icon name={icon} /></ViewButton>
              ))}
            </ViewBar>
            <Model />
          </View>
        </Work>

        <Status>
          <StatusToggle aria-label="模型树"><Icon name="tree" /></StatusToggle>
          <StatusToggle aria-label="浏览器"><Icon name="browser" /></StatusToggle>
          <Message><Icon name="warning" />装配元件的绝对精度有冲突。请参阅文件 手机壳.ACC。</Message>
          <StatusCell />
          <FindButton aria-label="查找"><Icon name="binoculars" /></FindButton>
          <Filter aria-label="过滤器" />
        </Status>

        <Tolerances>
          X.X+-0.1<br />X.XX+-0.01<br />X.XXX+-0.001<br />ANG+-0.5
        </Tolerances>
        <Brand>
          <Ball />
          <BrandText>
            <BrandName>专职网</BrandName>
            <BrandSite>Zhuanzhi.Net</BrandSite>
          </BrandText>
        </Brand>
      </Shell>
    </>
  );
}
